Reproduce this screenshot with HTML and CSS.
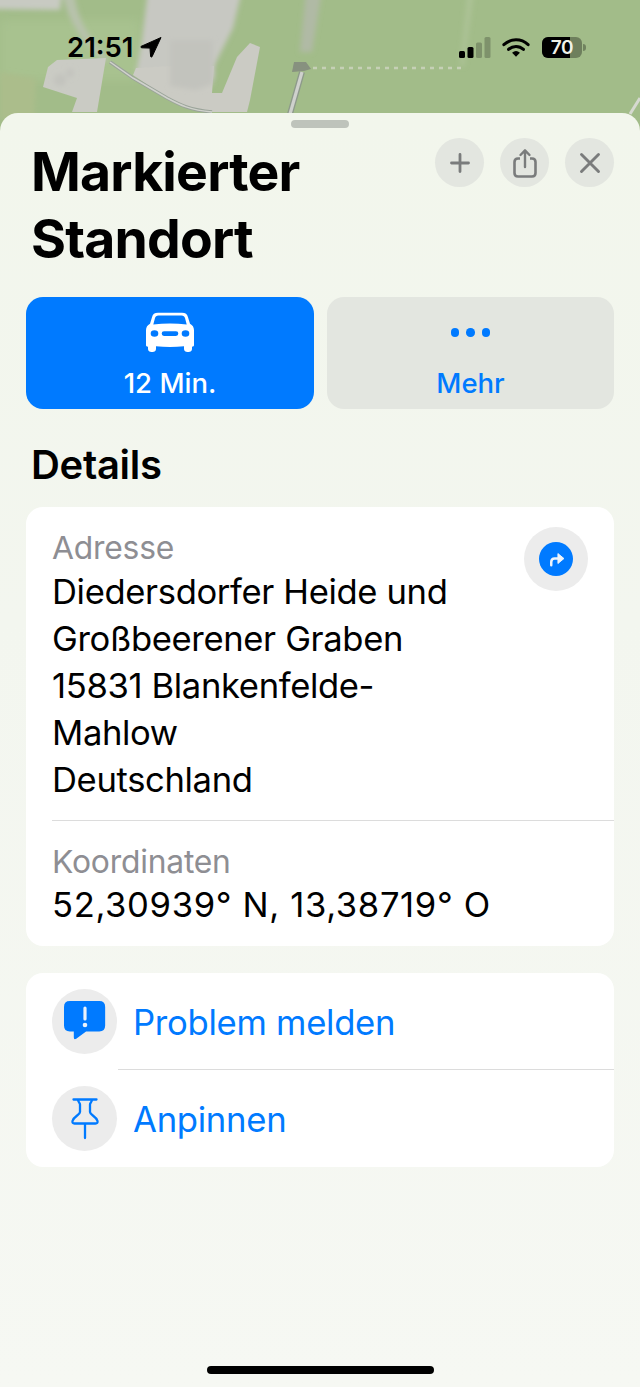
FILE: index.html
```html
<!DOCTYPE html>
<html lang="de">
<head>
<meta charset="utf-8">
<title>Markierter Standort</title>
<link rel="stylesheet" href="styles.css">
</head>
<body>
<div class="screen">
  <svg class="map" viewBox="0 0 640 140" width="640" height="140">
    <defs>
      <filter id="b6"><feGaussianBlur stdDeviation="5"/></filter>
      <filter id="b3"><feGaussianBlur stdDeviation="2.500"/></filter>
      <filter id="b1"><feGaussianBlur stdDeviation="0.700"/></filter>
      <filter id="top"><feGaussianBlur stdDeviation="2.500"/></filter>
    </defs>
    <rect width="640" height="140" fill="#a2bc89"/>
    <rect x="0" y="20" width="140" height="60" fill="#a8c28f" filter="url(#b6)"/>
    <path d="M0 72 L36 78 L34 120 L0 120Z" fill="#abbd8b" filter="url(#b3)"/>
    <g filter="url(#top)">
      <path d="M-10 -10 H62 L60 10 L-10 9Z" fill="#c8cac2"/>
      <path d="M62 -10 H74 C76 20 92 42 110 60 L104 62 C84 44 66 20 62 -10Z" fill="#b8c2ac"/>
      <path d="M148 -10 H242 L233 28 L214 66 L214 78 L136 72 L142 40Z" fill="#c7c8c2"/>
      <path d="M306 -10 H322 L312 52 H300Z" fill="#b0baa5"/>
      <path d="M468 -10 H474 L464 66 H460Z" fill="#adc397"/>
    </g>
    <g filter="url(#b1)">
      <path d="M43 87 L48 67 L57 60 L106 58 L97 112 H72 L77 98Z" fill="#cacbc4"/>
      <path d="M136 68 L170 66 H214 L212 93 H222 L237 57 L250 43 L260 47 L250 100 L247 112 H210 L190 108 L167 98 L133 75Z" fill="#cbcbc4"/>
      <path d="M110 62 L133 78 L167 98 C180 105 190 110 212 112" fill="none" stroke="#9ba49a" stroke-width="3.600"/>
      <path d="M110 62 L133 78 L167 98 C180 105 190 110 212 112" fill="none" stroke="#d0d2cc" stroke-width="1.500"/>
      <path d="M302 72 L290 114" stroke="#8e9a8b" stroke-width="6" fill="none"/>
      <path d="M302 72 L290 114" stroke="#cfd1cd" stroke-width="3.200" fill="none"/>
      <path d="M292 72 L294 62 L306 62 L311 69 L304 71Z" fill="#87917f"/>
      <path d="M313 68 H462" stroke="#c5d0b6" stroke-width="2.500" stroke-dasharray="4 5" fill="none"/>
      <path d="M640 98 L630 114" stroke="#d6d9d0" stroke-width="3" fill="none"/>
    </g>
    <g filter="url(#b3)" fill="#c2c3bd">
      <path d="M170 40 H213 V84 L196 90 L170 86Z"/>
      <circle cx="60" cy="80" r="6"/>
      <circle cx="70" cy="73" r="4"/>
    </g>
  </svg>

  <header class="statusbar">
    <div class="clock">
      <span>21:51</span>
      <svg class="loc" viewBox="0 0 22 22" width="22" height="22"><path d="M21 1.500 L1 10.400 Q0.500 11.600 1.800 11.800 L10 12.100 L10.600 20.400 Q11 21.600 12 20.800Z" fill="#000" stroke="#000" stroke-linejoin="round"/></svg>
    </div>
    <div class="indicators">
      <svg viewBox="0 0 32 21" width="32" height="21" class="signal">
        <rect x="0" y="14" width="6" height="7" rx="1.500" fill="#000"/>
        <rect x="8.500" y="10" width="6" height="11" rx="1.500" fill="#000"/>
        <rect x="17" y="5.500" width="6" height="15.500" rx="1.500" fill="#000" opacity=".22"/>
        <rect x="25.500" y="0" width="6" height="21" rx="1.500" fill="#000" opacity=".22"/>
      </svg>
      <svg viewBox="0 0 30 22" width="28" height="21" class="wifi">
        <path d="M2 8 C9.500 1 20.500 1 28 8" fill="none" stroke="#000" stroke-width="3.200" stroke-linecap="round"/>
        <path d="M7 13 C11.500 8.800 18.500 8.800 23 13" fill="none" stroke="#000" stroke-width="3.200" stroke-linecap="round"/>
        <path d="M10.800 16.500 Q15 13 19.200 16.500 L15 21Z" fill="#000"/>
      </svg>
      <div class="battery">
        <div class="cell"><div class="level"></div><span class="pct">70</span></div>
        <div class="nub"></div>
      </div>
    </div>
  </header>

  <main class="sheet">
    <div class="grabber"></div>
    <div class="head">
      <h1>Markierter<br>Standort</h1>
      <div class="head-actions">
        <button class="round">
          <svg viewBox="0 0 24 24" width="24" height="24"><path d="M12 3.500V20.500M3.500 12H20.500" stroke="#7a7c7c" stroke-width="2.800" stroke-linecap="round"/></svg>
        </button>
        <button class="round">
          <svg viewBox="0 0 26 32" width="26" height="32"><path d="M8 11.500H6Q2.500 11.500 2.500 15V26Q2.500 29.500 6 29.500H20Q23.500 29.500 23.500 26V15Q23.500 11.500 20 11.500H18" fill="none" stroke="#7a7c7c" stroke-width="2.600"/><path d="M13 20V3.500M8.500 8L13 3.300L17.500 8" fill="none" stroke="#7a7c7c" stroke-width="2.400" stroke-linecap="round" stroke-linejoin="round"/></svg>
        </button>
        <button class="round">
          <svg viewBox="0 0 24 24" width="24" height="24"><path d="M3.500 3.500L20.500 20.500M20.500 3.500L3.500 20.500" stroke="#7a7c7c" stroke-width="2.900" stroke-linecap="round"/></svg>
        </button>
      </div>
    </div>

    <div class="tiles">
      <button class="tile tile-primary">
        <svg viewBox="0 0 50 46" width="50" height="40" preserveAspectRatio="none" class="tile-icon"><path fill-rule="evenodd" fill="#fff" d="M13 1H37C40.500 1 42.300 2.500 43 6L45 13.500C47.500 15 49 17.500 49 21V38C49 39 48.500 40 47 40V42.500C47 44.500 45.500 46 43.500 46H42.500C40.500 46 39 44.500 39 42.500V39.500C30 40.400 20 40.400 11 39.500V42.500C11 44.500 9.500 46 7.500 46H6.500C4.500 46 3 44.500 3 42.500V40C1.500 40 1 39 1 38V21C1 17.500 2.500 15 5 13.500L7 6C7.700 2.500 9.500 1 13 1ZM13.500 4C11.500 4 10.500 5 10 7L8.300 14.500C19 12.800 31 12.800 41.700 14.500L40 7C39.500 5 38.500 4 36.500 4ZM9.500 21A3.800 3.800 0 1 0 9.500 28.600A3.800 3.800 0 1 0 9.500 21ZM40.500 21A3.800 3.800 0 1 0 40.500 28.600A3.800 3.800 0 1 0 40.500 21ZM19 22Q16.700 22 16.700 24.800Q16.700 27.500 19 27.500H31Q33.300 27.500 33.300 24.800Q33.300 22 31 22Z"/></svg>
        <span>12 Min.</span>
      </button>
      <button class="tile tile-more">
        <span class="dots"><i></i><i></i><i></i></span>
        <span>Mehr</span>
      </button>
    </div>

    <h2>Details</h2>

    <section class="card details">
      <div class="field address">
        <div class="field-label">Adresse</div>
        <div class="field-value">Diedersdorfer Heide und<br>Großbeerener Graben<br>15831 Blankenfelde-<br>Mahlow<br>Deutschland</div>
        <button class="round route">
          <span class="route-disc">
            <svg viewBox="0 0 22 22" width="21" height="21"><path d="M5.500 17V13.500Q5.500 10 9 10H14" fill="none" stroke="#eef4fb" stroke-width="2.600" stroke-linecap="round"/><path d="M12.500 4.800L18.800 10L12.500 15.200Z" fill="#eef4fb" stroke="#eef4fb" stroke-linejoin="round"/></svg>
          </span>
        </button>
      </div>
      <div class="field coords">
        <div class="field-label">Koordinaten</div>
        <div class="field-value">52,30939° N, 13,38719° O</div>
      </div>
    </section>

    <section class="card actions">
      <div class="action">
        <span class="action-icon">
          <svg viewBox="0 0 42 42" width="42" height="42"><path fill="#007aff" d="M6 0H36Q42 0 42 6V25Q42 31 36 31H22.500L12.500 38.500Q10 40 10 37V31H6Q0 31 0 25V6Q0 0 6 0Z" transform="scale(.98)"/><path d="M21 7V18" stroke="#eaf2fb" stroke-width="3.200" stroke-linecap="round"/><circle cx="21" cy="24" r="2.300" fill="#eaf2fb"/></svg>
        </span>
        <span class="action-label">Problem melden</span>
      </div>
      <div class="action">
        <span class="action-icon">
          <svg viewBox="0 0 30 42" width="30" height="42"><path d="M3.500 1.500H26.500M8 1.500C8 4 10 5 10 6.500V14C10 17 4 18 2.500 23Q2 25.500 4.500 25.500H25.500Q28 25.500 27.500 23C26 18 20 17 20 14V6.500C20 5 22 4 22 1.500M15 25.500V40" fill="none" stroke="#007aff" stroke-width="2.300" stroke-linecap="round" stroke-linejoin="round"/></svg>
        </span>
        <span class="action-label">Anpinnen</span>
      </div>
    </section>

    <div class="home-indicator"></div>
  </main>
</div>
</body>
</html>
```
FILE: styles.css
```css
* { box-sizing: border-box; }
html, body { margin: 0; padding: 0; }
body {
  width: 640px;
  height: 1387px;
  overflow: hidden;
  font-family: Inter, "Liberation Sans", sans-serif;
  color: #000;
  background: #a2bc89;
}
button { border: 0; padding: 0; font: inherit; }

.screen {
  position: relative;
  width: 640px;
  height: 1387px;
  padding-top: 113px;
  overflow: hidden;
}
.map { position: absolute; left: 0; top: 0; }

.statusbar {
  position: absolute;
  left: 0;
  top: 0;
  width: 640px;
  height: 96px;
  padding: 33px 54px 0 67px;
  display: flex;
  justify-content: space-between;
  align-items: flex-start;
}
.clock {
  display: flex;
  align-items: center;
  gap: 7px;
  font-size: 27.500px;
  font-weight: 600;
  line-height: 28px;
  letter-spacing: 0;
}
.loc { margin-top: -1px; }
.indicators { display: flex; align-items: center; gap: 11px; padding-top: 4px; }
.wifi { margin-top: -1px; }
.battery { display: flex; align-items: center; gap: 1px; margin-left: 1px; }
.cell {
  position: relative;
  width: 40px;
  height: 21px;
  border-radius: 6px;
  background: rgba(0,0,0,.32);
  overflow: hidden;
  display: flex;
  align-items: center;
  justify-content: center;
}
.level { position: absolute; left: 0; top: 0; bottom: 0; width: 28px; background: #000; }
.pct {
  position: relative;
  font-size: 19px;
  font-weight: 600;
  line-height: 21px;
  color: #eef2e8;
  letter-spacing: -0.3px;
}
.nub { width: 3px; height: 7px; border-radius: 0 3px 3px 0; background: rgba(0,0,0,.3); }

.sheet {
  position: relative;
  height: 1274px;
  padding: 0 26px;
  border-radius: 18px 18px 0 0;
  background: linear-gradient(180deg, #f2f6ec 0%, #f3f6ef 40%, #f6f8f3 100%);
}
.grabber {
  position: absolute;
  top: 7px;
  left: 291px;
  width: 58px;
  height: 8px;
  border-radius: 4px;
  background: #bec3bb;
}
.head {
  display: flex;
  justify-content: space-between;
  padding: 25px 0 0 5px;
  height: 184px;
}
h1 {
  margin: 0;
  font-size: 53.500px;
  line-height: 67px;
  font-weight: 700;
  letter-spacing: -0.8px;
}
.head-actions { display: flex; gap: 16px; }
.round {
  width: 49px;
  height: 49px;
  border-radius: 50%;
  background: #e3e6e0;
  display: flex;
  align-items: center;
  justify-content: center;
}
.tiles { display: flex; gap: 13px; }
.tile {
  width: 288px;
  height: 112px;
  border-radius: 17px;
  display: flex;
  flex-direction: column;
  align-items: center;
  font-size: 27.500px;
  font-weight: 500;
  line-height: 32px;
  padding-top: 15px;
}
.tile-primary { background: #007aff; color: #fff; }
.tile-more { background: #e3e6e0; color: #007aff; width: 287px; }
.tile-icon { margin-bottom: 15px; }
.dots { display: flex; gap: 7px; height: 40px; padding-top: 16px; margin-bottom: 15px; }
.dots i { width: 8.500px; height: 8.500px; border-radius: 50%; background: #007aff; display: block; }

h2 {
  margin: 34px 0 0 5px;
  height: 64px;
  font-size: 40px;
  line-height: 44px;
  font-weight: 600;
  letter-spacing: -0.3px;
}
.card {
  background: #fff;
  border-radius: 17px;
}
.details { height: 439px; padding: 20px 0 0 26px; margin-bottom: 27px; }
.field { font-size: 34.600px; line-height: 47px; letter-spacing: -0.35px; }
.address { position: relative; height: 294px; border-bottom: 1px solid #dcdcdc; }
.field-label { color: #8e8e93; font-size: 31.800px; line-height: 40px; letter-spacing: -0.2px; }
.address .field-label { padding-top: 1px; }
.field-value { margin-top: 0; }
.coords { padding-top: 21px; }
.coords .field-value { letter-spacing: 0.65px; margin-top: -1px; }
.route {
  position: absolute;
  top: 0;
  right: 26px;
  width: 64px;
  height: 64px;
  background: #ececec;
}
.route-disc {
  width: 34px;
  height: 34px;
  border-radius: 50%;
  background: #007aff;
  display: flex;
  align-items: center;
  justify-content: center;
}
.actions { height: 194px; }
.action {
  position: relative;
  height: 97px;
  padding-left: 26px;
  display: flex;
  align-items: center;
  gap: 16px;
  color: #007aff;
  font-size: 34.700px;
  letter-spacing: -0.3px;
}
.action:first-child::after {
  content: "";
  position: absolute;
  left: 92px;
  right: 0;
  bottom: 0;
  height: 1px;
  background: #dcdcdc;
}
.action-icon {
  width: 65px;
  height: 65px;
  border-radius: 50%;
  background: #ececec;
  display: flex;
  align-items: center;
  justify-content: center;
  flex: none;
}
.home-indicator {
  position: absolute;
  left: 207px;
  bottom: 13px;
  width: 227px;
  height: 8px;
  border-radius: 4px;
  background: #000;
}
```
